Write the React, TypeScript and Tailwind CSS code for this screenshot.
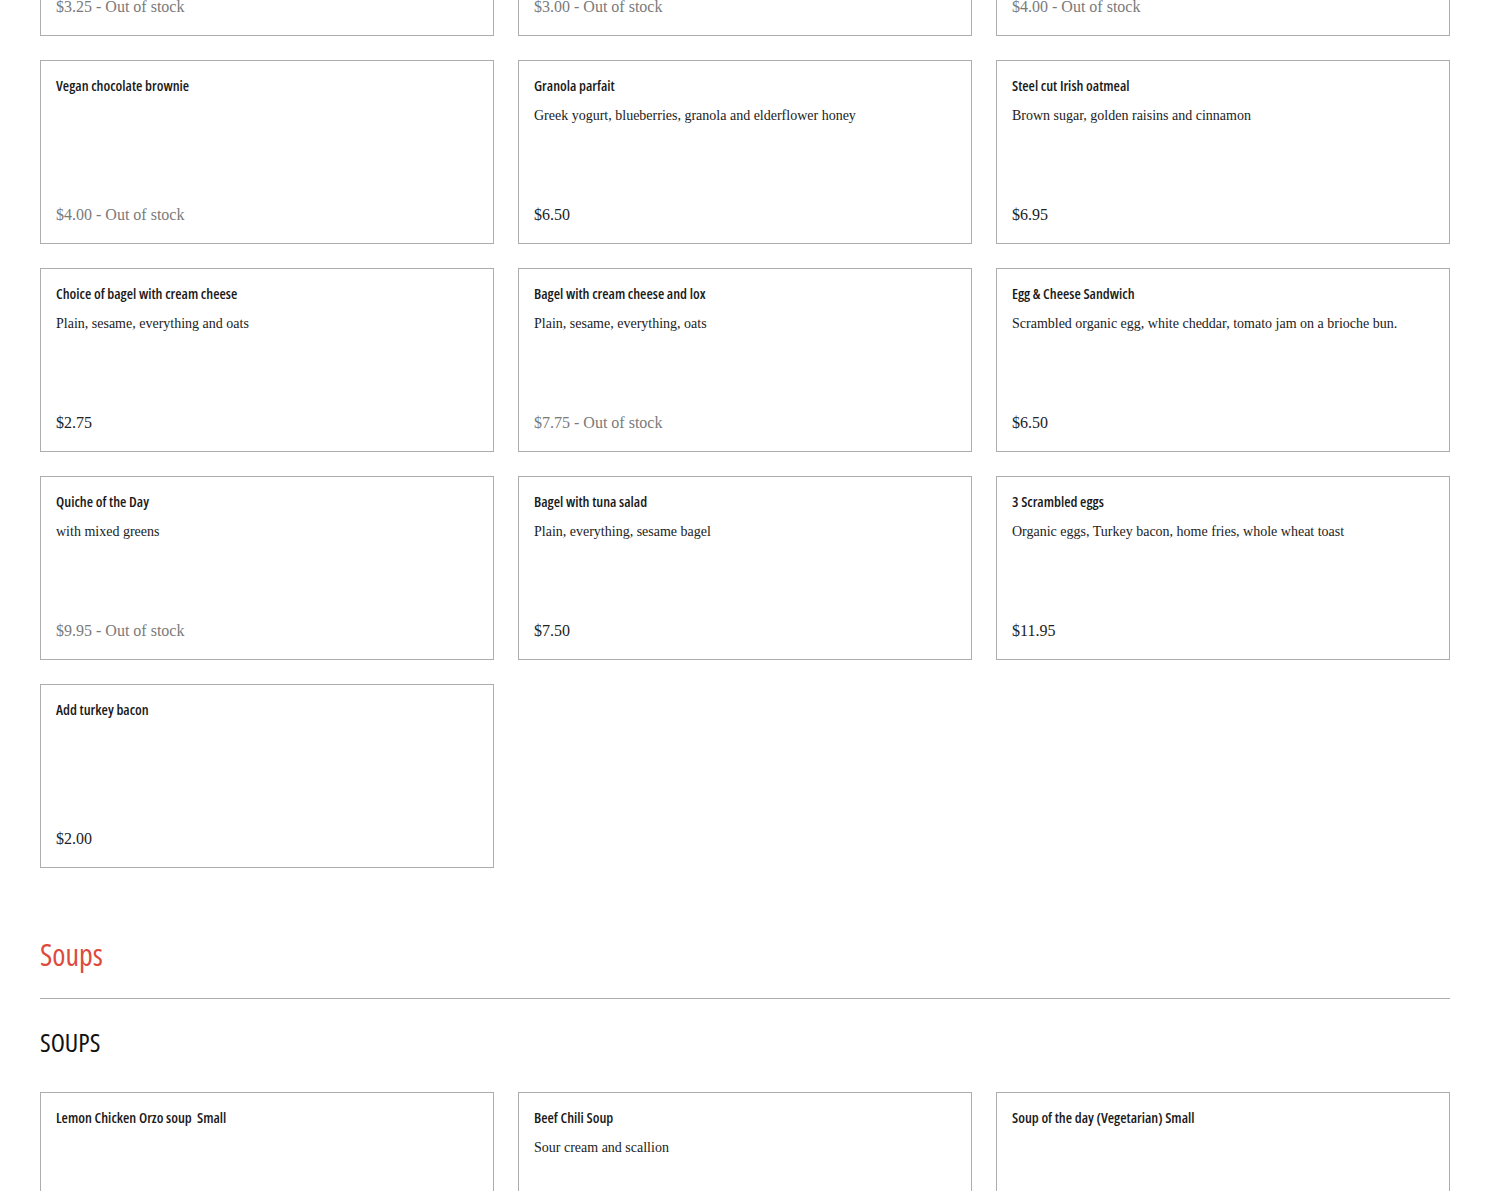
const breakfast = [
  { name: "Muffin", desc: "", price: "$3.25", out: true },
  { name: "Croissant", desc: "", price: "$3.00", out: true },
  { name: "Scone", desc: "", price: "$4.00", out: true },
  { name: "Vegan chocolate brownie", desc: "", price: "$4.00", out: true },
  { name: "Granola parfait", desc: "Greek yogurt, blueberries, granola and elderflower honey", price: "$6.50", out: false },
  { name: "Steel cut Irish oatmeal", desc: "Brown sugar, golden raisins and cinnamon", price: "$6.95", out: false },
  { name: "Choice of bagel with cream cheese", desc: "Plain, sesame, everything and oats", price: "$2.75", out: false },
  { name: "Bagel with cream cheese and lox", desc: "Plain, sesame, everything, oats", price: "$7.75", out: true },
  { name: "Egg & Cheese Sandwich", desc: "Scrambled organic egg, white cheddar, tomato jam on a brioche bun.", price: "$6.50", out: false },
  { name: "Quiche of the Day", desc: "with mixed greens", price: "$9.95", out: true },
  { name: "Bagel with tuna salad", desc: "Plain, everything, sesame bagel", price: "$7.50", out: false },
  { name: "3 Scrambled eggs", desc: "Organic eggs, Turkey bacon, home fries, whole wheat toast", price: "$11.95", out: false },
  { name: "Add turkey bacon", desc: "", price: "$2.00", out: false },
];

const soups = [
  { name: "Lemon Chicken Orzo soup  Small", desc: "", price: "$5.50", out: false },
  { name: "Beef Chili Soup", desc: "Sour cream and scallion", price: "$6.50", out: false },
  { name: "Soup of the day (Vegetarian) Small", desc: "", price: "$5.00", out: false },
];

type Item = { name: string; desc: string; price: string; out: boolean };

const condensed = "font-['Open_Sans','DejaVu_Sans_Condensed',sans-serif] [font-stretch:75%]";
const serif = "font-['Liberation_Serif','Times_New_Roman',serif]";

function Card({ item }: { item: Item }) {
  return (
    <div className="flex h-[184px] flex-col border border-[#adadad] bg-white px-[15px] pt-[15px] pb-[18px]">
      <div className={`${condensed} text-[14.5px] leading-[20px] font-semibold whitespace-pre text-[#1a1a1a]`}>
        {item.name}
      </div>
      {item.desc && (
        <div className={`${serif} mt-[10px] text-[14px] leading-[20px] text-[#222]`}>{item.desc}</div>
      )}
      <div className={`${serif} mt-auto text-[16px] leading-[20px] ${item.out ? "text-[#7a7a7a]" : "text-[#222]"}`}>
        {item.price}
        {item.out && " - Out of stock"}
      </div>
    </div>
  );
}

export default function App() {
  return (
    <div className="min-h-[1191px] overflow-hidden bg-white px-10">
      <div className="-mt-[148px] grid grid-cols-3 gap-6">
        {breakfast.map((item) => (
          <Card key={item.name} item={item} />
        ))}
      </div>

      <div className="mt-[67px] border-b border-[#adadad] pb-[23px]">
        <h2 className={`${condensed} text-[30px] leading-[40px] text-[#de4a3c]`}>Soups</h2>
      </div>

      <h3 className={`${condensed} mt-[27px] text-[26px] leading-[32px] text-[#111]`}>SOUPS</h3>

      <div className="mt-[34px] grid grid-cols-3 gap-6">
        {soups.map((item) => (
          <Card key={item.name} item={item} />
        ))}
      </div>
    </div>
  );
}
